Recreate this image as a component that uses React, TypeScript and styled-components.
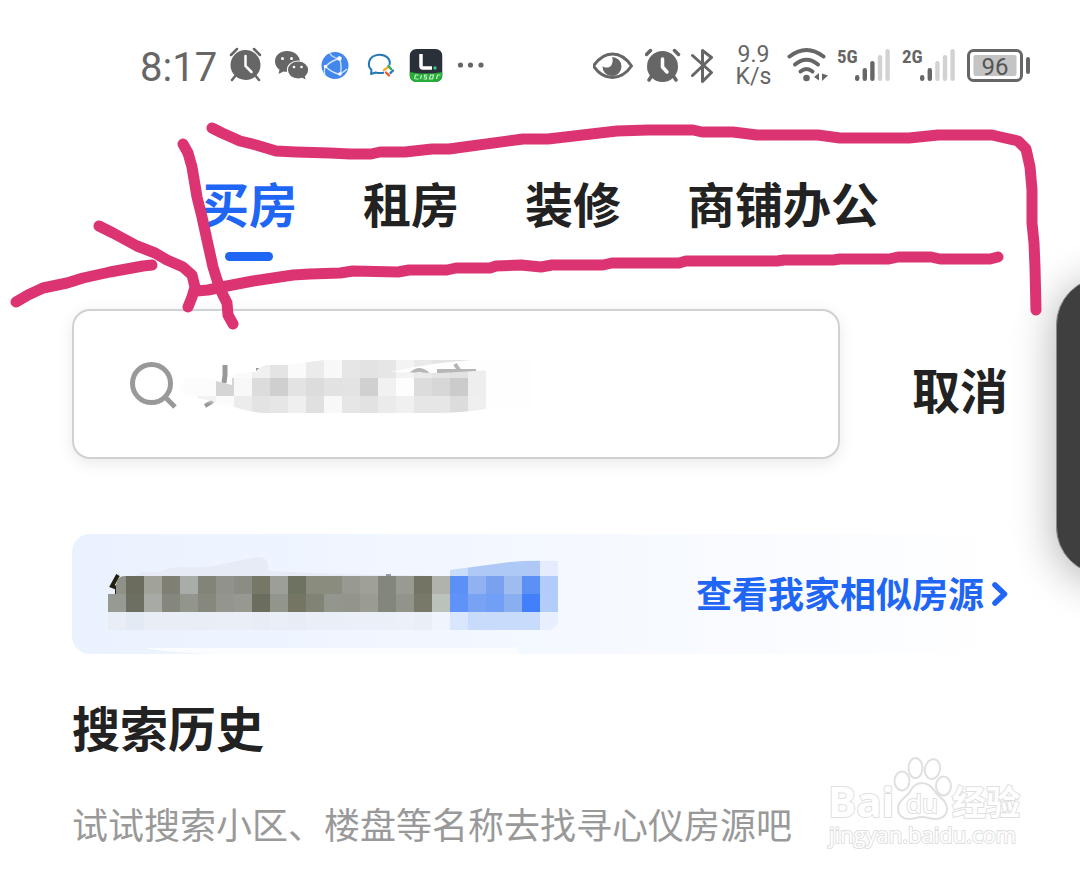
import React from 'react';
import styled, { createGlobalStyle } from 'styled-components';

const GlobalStyle = createGlobalStyle`
  body {
    margin: 0;
    background: #fff;
    font-family: Roboto, 'Noto Sans CJK SC', sans-serif;
    color: #222;
  }
`;

const Screen = styled.div`
  position: relative;
  min-height: 100vh;
  overflow: hidden;
`;

const StatusBar = styled.header`
  display: flex;
  justify-content: space-between;
  padding: 44px 49px 0 140px;
  color: #666;
`;

const StatusGroup = styled.div<{ $gap: number }>`
  display: flex;
  align-items: center;
  gap: ${(p) => p.$gap}px;
  height: 44px;
`;

const Clock = styled.time`
  width: 77px;
  padding-top: 4px;
  font-size: 40px;
  line-height: 44px;
  white-space: nowrap;
`;

const NetSpeed = styled.div`
  width: 44px;
  font-size: 23px;
  line-height: 22px;
`;

const SpeedLine = styled.span`
  display: block;
  width: 37px;
  text-align: center;
`;

const Glyph = styled.svg`
  display: block;
  flex: none;
  height: 40px;
`;

const Main = styled.main`
  padding: 86px 72px 0;
`;

const Tabs = styled.nav`
  display: flex;
  gap: 66px;
  padding-left: 129px;
`;

const Tab = styled.button<{ $active?: boolean }>`
  display: flex;
  flex-direction: column;
  align-items: center;
  gap: 22px;
  padding: 0;
  border: 0;
  background: none;
  font: 700 48px/56px 'Noto Sans CJK SC', sans-serif;
  white-space: nowrap;
  color: ${(p) => (p.$active ? '#1f66f5' : '#222')};

  &::after {
    content: '';
    width: 48px;
    height: 9px;
    border-radius: 5px;
    background: ${(p) => (p.$active ? '#1f66f5' : 'transparent')};
  }
`;

const SearchRow = styled.form`
  display: flex;
  align-items: center;
  gap: 72px;
  margin-top: 48px;
`;

const SearchBox = styled.label`
  display: flex;
  align-items: center;
  flex: 1;
  box-sizing: border-box;
  height: 150px;
  padding-left: 54px;
  border: 2px solid #d0d1d4;
  border-radius: 18px;
  background: #fff;
  box-shadow: 0 4px 16px rgba(0, 0, 0, 0.09);
`;

const SearchField = styled.div`
  position: relative;
  flex: 1;
`;

const SearchInput = styled.input`
  width: 100%;
  box-sizing: border-box;
  padding: 0 20px;
  border: 0;
  outline: 0;
  background: none;
  font: 400 42px/60px 'Noto Sans CJK SC', sans-serif;
  color: #999;
`;

const SearchMask = styled.svg`
  position: absolute;
  left: 0;
  top: 0;
  pointer-events: none;
`;

const Cancel = styled.button`
  margin-top: 8px;
  padding: 0;
  border: 0;
  background: none;
  font: 700 48px/56px 'Noto Sans CJK SC', sans-serif;
  color: #222;
`;

const Banner = styled.section`
  display: flex;
  align-items: center;
  justify-content: space-between;
  height: 120px;
  margin-top: 75px;
  padding-left: 36px;
  border-radius: 18px;
  background: linear-gradient(90deg, #eaf2ff, #f4f8ff 50%, #ffffff);
`;

const BannerLink = styled.a`
  display: flex;
  align-items: center;
  gap: 8px;
  font: 700 36px/48px 'Noto Sans CJK SC', sans-serif;
  white-space: nowrap;
  text-decoration: none;
  color: #1f66f5;
`;

const BannerLabel = styled.span`
  padding-bottom: 4px;
`;

const BannerPicture = styled.svg`
  display: block;
  flex: none;
`;

const HistoryTitle = styled.h2`
  margin: 44px 0 0;
  font: 700 48px/56px 'Noto Sans CJK SC', sans-serif;
`;

const HistoryHint = styled.p`
  margin: 45px 0 0;
  font: 400 36px/48px 'Noto Sans CJK SC', sans-serif;
  color: #999;
`;

const EdgeHandle = styled.div`
  position: absolute;
  right: -72px;
  top: 277px;
  box-sizing: border-box;
  width: 96px;
  height: 298px;
  border: 1px solid #8a8a8a;
  border-radius: 48px;
  background: #3f3f3f;
  box-shadow: 0 6px 44px rgba(0, 0, 0, 0.32);
`;

const Annotation = styled.svg`
  position: absolute;
  left: 0;
  top: 0;
  width: 100%;
  pointer-events: none;
`;

const Watermark = styled.svg`
  position: absolute;
  right: 54px;
  bottom: 21px;
`;

const AlarmIcon = () => (
  <Glyph width="34" viewBox="229 46 34 40" fill="none" strokeLinecap="round" aria-label="闹钟">
    <circle cx="245.500" cy="65" r="15" fill="#666" />
    <path d="M231 55l6-6M260 55l-6-6M236 75l-4 5M255 75l4 5" stroke="#666" strokeWidth="2.500" />
    <path d="M245.500 56v10l6 6" stroke="#fff" strokeWidth="2.500" />
  </Glyph>
);

const WechatIcon = () => (
  <Glyph width="34" viewBox="274 46 34 40" fill="#666" aria-label="微信">
    <path d="M286 51c-7 0-12 4.500-12 10.500 0 3.500 2 6.500 4.500 8.300L277.500 74l5-2.400c2 .5 3 .6 5 .6 7 0 11.500-4.500 11.500-10.500S293 51 286 51z" />
    <path
      d="M297 61c-6 0-10.600 4-10.600 9s4.600 9 10.600 9c1.600 0 2.900-.2 4.200-.7l4.300 2.200-1-3.900c2-1.600 3.200-4 3.200-6.600 0-5-4.700-9-10.700-9z"
      stroke="#fff"
      strokeWidth="1.200"
    />
    <g fill="#fff">
      <circle cx="281.500" cy="58.500" r="1.500" />
      <circle cx="290.500" cy="58.500" r="1.500" />
      <circle cx="293" cy="67" r="1.300" />
      <circle cx="300.500" cy="67" r="1.300" />
    </g>
  </Glyph>
);

const GlobeIcon = () => (
  <Glyph width="28" viewBox="321.500 46 28 40" fill="none" aria-label="浏览器">
    <circle cx="335.500" cy="65.500" r="13.500" fill="#4387ec" />
    <path
      d="M330 53q3 5 10 5.500M340 58.500q-8 2-14 8M340 58.500q3 9 .5 16M326 66.500q6 6 14.500 8M326 66.500q-2 4-.5 9M340.500 74q4-2 7-5"
      stroke="#d4e6ff"
      strokeWidth="1.300"
    />
    <circle cx="340" cy="58.500" r="2.200" fill="#fff" />
    <circle cx="326" cy="66.500" r="1.800" fill="#fff" />
    <circle cx="340.500" cy="74" r="1.800" fill="#fff" />
  </Glyph>
);

const WorkChatIcon = () => (
  <Glyph width="36" viewBox="361 46 36 40" fill="none" aria-label="企业微信">
    <path
      d="M384 72.500c-2 .7-6 .6-8.500 0l-4.500 1.500.5-4c-5-5-3-14.500 7.500-15.300 7-.3 12 4.300 10.500 10.300"
      stroke="#2378b5"
      strokeWidth="2"
      strokeLinejoin="round"
    />
    <g strokeWidth="2.400" strokeLinecap="round">
      <path d="M384 70l3.500-2.500" stroke="#f3b02c" />
      <path d="M388.500 66l2.500 3" stroke="#36a853" />
      <path d="M390.500 73l2.500-2.500" stroke="#2378b5" />
      <path d="M386 72.500l3 3" stroke="#ea5a2c" />
    </g>
  </Glyph>
);

const LearnIcon = () => (
  <Glyph width="34" viewBox="408.500 46 34 40" fill="none" aria-label="学习">
    <clipPath id="tile">
      <rect x="409" y="49" width="33" height="33" rx="7" />
    </clipPath>
    <g clipPath="url(#tile)">
      <rect x="409" y="49" width="33" height="33" fill="#2a303a" />
      <path d="M409 72q16 3 33 0v10h-33z" fill="#27ac38" />
      <path d="M414 79l1-4h3m0 4h-3m5 0l1-4m2 4h3v-2h-2v-2h3m2 4h3l1-4h-3zm7 0l1-4h3" stroke="#c6efc9" strokeWidth="1.200" />
    </g>
    <path d="M420.500 54v12q0 2 2 2h9" stroke="#fff" strokeWidth="3.500" />
    <circle cx="434.500" cy="68" r="1.700" fill="#36c48a" />
  </Glyph>
);

const MoreIcon = () => (
  <Glyph width="32" viewBox="455 46 32 40" fill="#666" aria-label="更多">
    <circle cx="460.500" cy="65" r="2.600" />
    <circle cx="470.500" cy="65" r="2.600" />
    <circle cx="481" cy="65" r="2.600" />
  </Glyph>
);

const EyeIcon = () => (
  <Glyph width="44" viewBox="592 46 44 40" fill="none" aria-label="护眼">
    <path d="M592.500 66q8-12 19-12t19 12q-8 11.500-19 11.500T592.500 66z" stroke="#666" strokeWidth="3" strokeLinejoin="round" />
    <path d="M611 57a9.500 9.500 0 1 1-9.500 9c2 2 7 2.500 9-1 1.500-2.500 1.500-6 .5-8z" fill="#666" />
  </Glyph>
);

const RingIcon = () => (
  <Glyph width="38" viewBox="644 46 38 40" fill="none" strokeLinecap="round" aria-label="闹钟">
    <circle cx="661.500" cy="66.500" r="15.500" fill="#666" />
    <path d="M645.500 54.500l4-4M677.500 54.500l-4-4M650 77l-2 3M673 77l2 3" stroke="#666" strokeWidth="3.500" />
    <path d="M661.500 59v8l4.500 5" stroke="#fff" strokeWidth="3.500" />
  </Glyph>
);

const BluetoothIcon = () => (
  <Glyph width="36" viewBox="691 46 36 40" fill="none" aria-label="蓝牙">
    <path d="M692.500 55.500l19 17-9 9v-31l9 7-19 18" stroke="#666" strokeWidth="3" strokeLinecap="round" strokeLinejoin="round" />
  </Glyph>
);

const WifiIcon = () => (
  <Glyph width="42" viewBox="787 46 42 40" fill="none" aria-label="无线网络">
    <g stroke="#666" strokeWidth="4" strokeLinecap="round">
      <path d="M789.500 56.500q17-13 34 0" />
      <path d="M795 64.500q11.500-9.500 23 0" />
      <path d="M800.500 71.500q6-5 12 0" />
    </g>
    <circle cx="806.500" cy="78" r="3.300" fill="#666" />
    <path d="M819 73v7.500l-5-3.500zM822 81v-7.500l6 2z" fill="#666" />
  </Glyph>
);

const SignalText = styled.text`
  font: 700 19px 'Liberation Sans Narrow', 'Roboto Condensed', Roboto, sans-serif;
  fill: #666;
`;

const barTops = [75, 68, 61, 55, 49];

const Signal = ({ label, level }: { label: string; level: number }) => (
  <Glyph width="57" viewBox="836 46 57 40" aria-label={label}>
    <SignalText x="836" y="63">
      {label}
    </SignalText>
    {barTops.map((top, i) => (
      <rect key={top} x={854 + i * 7.6} y={top} width="4.400" height={81 - top} rx="2.200" fill={i < level ? '#666' : '#d2d2d2'} />
    ))}
  </Glyph>
);

const BatteryText = styled.text`
  font: 400 24px Roboto, sans-serif;
  fill: #555;
`;

const Battery = () => (
  <Glyph width="64" viewBox="967 46 64 40" aria-label="电量">
    <rect x="968.500" y="50.500" width="53" height="30" rx="5" fill="none" stroke="#666" strokeWidth="3" />
    <rect x="973.500" y="55" width="43" height="21" rx="2" fill="#c4c4c4" />
    <rect x="1026" y="57" width="4" height="17" rx="2" fill="#666" />
    <BatteryText x="995" y="75" textAnchor="middle">
      96
    </BatteryText>
  </Glyph>
);

const CELL = 18;

const Mosaic = ({ x, y, colors }: { x: number; y: number; colors: string }) => (
  <>
    {colors.split(' ').map((c, i) => (
      <rect key={i} x={x + i * CELL} y={y} width={CELL} height={CELL} fill={`#${c}`} shapeRendering="crispEdges" />
    ))}
  </>
);

const SearchBlur = () => (
  <SearchMask width="370" height="60" viewBox="180 354 370 60" aria-hidden="true">
    <path d="M225 365v10l-1 8" fill="none" stroke="#999" strokeWidth="5" />
    <path d="M205 406l8-5M258 368v5M411 374q8-8 17 0M437 371h39M455 364l4 6" fill="none" stroke="#999" strokeWidth="4" />
    <path
      d="M183 382q2-9 13-9l20 8 16 4q-2-10 8-11l14-2 10-6 30-1 28-5h210v48h-50q-130 4-210 4-40-1-80-14l-16-7q-9-4-8-11z"
      fill="#fdfdfd"
      opacity=".3"
    />
    <clipPath id="searchBrush">
      <path d="M183 382q2-9 13-9l20 8 16 4v-8q2-4 8-4l15-1q5-6 12-7h21l36-5h150q-40 2-83 12l49 1 53-3v37q-16 5-54 6H262q-15-1-36-9l-28-6q-14-1-15-8z" />
    </clipPath>
    <g clipPath="url(#searchBrush)">
      <Mosaic x={234} y={360} colors="fafafa f0f0f0 e4e4e4 fafafa ebebeb f8f8f8 e6e6e6 e3e3e3 e6e6e6 f3f3f3 eaeaea e4e4e4 e2e2e2 eeeeee" />
      <Mosaic x={180} y={378} colors="fcfcfc fcfcfc d5d5d5 f8f8f8 dcdcdc cfcfcf e3e3e3 dcdcdc e2e2e2 e3e3e3 d0d0d0 f1f1f1 fdfdfd dcdcdc d7d7d7 cbcbcb eeeeee" />
      <Mosaic x={198} y={396} colors="f2f2f2 fbfbfb ececec e3e3e3 e6e6e6 efefef e0e0e0 f8f8f8 e6e6e6 e2e2e2 ebebeb f0f0f0 e6e6e6 e6e6e6 dcdcdc efefef" />
    </g>
  </SearchMask>
);

const BannerBlur = () => (
  <BannerPicture width="480" height="120" viewBox="108 534 480 120" aria-hidden="true">
    <path d="M135 577q2-5 12-5h12q10-5 24-5 22 2 40-3l34-7q10 0 11 7v7l70 3 104 2z" fill="#e6ebf5" />
    <path d="M118 575l-6 11 5 2v6" fill="none" stroke="#221f0c" strokeWidth="4" />
    <path d="M386 575h5" stroke="#444" strokeWidth="1" />
    <clipPath id="bannerBrush">
      <path d="M108 594h8v-9q1-9 9-9h325v-6l60-8q20-2 48-1v59q0 10-12 10H108z" />
    </clipPath>
    <g clipPath="url(#bannerBrush)">
      <Mosaic x={450} y={558} colors="c9dcf9 aec9f6 aec9f6 aec9f6 aec9f6 e4ecfd" />
      <Mosaic
        x={108}
        y={576}
        colors="8f9088 6b6c5d a1a39b 7f7f73 a8adaa 82847a 91928b 8b8c84 767765 9b9f98 6e7261 8a8c7d 8a8c7f 989991 9fa097 83867a 999a92 737463 b0b2ac 5b90f5 91b1f2 78a1f0 9fbcf1 5b90f5 b1ccfb"
      />
      <Mosaic
        x={108}
        y={594}
        colors="979a93 6c6f61 a8aaa6 85877d 91958c 86887d 94958e 979890 6b6d5e 92958c 747562 818376 93968c 93948c 9a9b93 83867a 92938b 787968 bbc1bb 6093f7 78a2f3 719ff5 8aaff1 4180fa b3cdfb"
      />
      <Mosaic
        x={108}
        y={612}
        colors="e8edf6 e3eaf4 e8edf6 e8edf6 e9eef6 e9eef6 e9eef7 e9eef7 e8ecf4 eaeff7 e8edf5 eaeff7 eaeff7 ebeff8 ebeff8 ebeff7 ecf0f8 eaeff7 f0f5fd d9e6fd c9dbfb c9dbfb c9dbfb c9dbfb e8effe"
      />
    </g>
    <path d="M145 648h360l13-1v7H220q-50-1-75-6z" fill="#fbfcff" />
  </BannerPicture>
);

const strokes = [
  'M212 128L222 133 240 141 256 145 276 151 296 152 330 153 350 154 371 154 380 152 405 152 432 149 449 149 523 139 548 139 617 131 648 130 693 130 702 132 733 132 757 135 818 135 840 138 909 138 938 135 992 135 1005 138 1018 141 1026 149 1030 167 1032 190 1032 223 1034 243 1035 267 1036 310',
  'M197 291L208 290 227 286 253 281 293 275 310 274 340 273 353 271 398 272 409 270 447 270 456 268 490 268 496 266 521 265 541 267 552 265 603 265 612 263 679 263 686 261 777 261 784 260 833 260 840 259 889 259 898 257 931 257 940 259 990 259 998 257',
  'M183 144L188 153 192 167 197 197 202 217 207 240 213 267 217 280 222 293 227 303 228 315 233 324',
  'M99 226L113 233 137 246 155 253 167 260 183 267 192 275 195 287 192 297 188 307',
  'M16 302L28 295 43 288 67 283 83 278 110 272 143 266 152 265',
];

const MarkText = styled.text<{ $size: number; $weight: number }>`
  font: ${(p) => `${p.$weight} ${p.$size}px`} 'Open Sans', 'Noto Sans CJK SC', sans-serif;
  paint-order: stroke;
`;

export default function App() {
  return (
    <Screen>
      <GlobalStyle />
      <StatusBar>
        <StatusGroup $gap={12}>
          <Clock>8:17</Clock>
          <AlarmIcon />
          <WechatIcon />
          <GlobeIcon />
          <WorkChatIcon />
          <LearnIcon />
          <MoreIcon />
        </StatusGroup>
        <StatusGroup $gap={8}>
          <EyeIcon />
          <RingIcon />
          <BluetoothIcon />
          <NetSpeed>
            <SpeedLine>9.9</SpeedLine>
            <SpeedLine>K/s</SpeedLine>
          </NetSpeed>
          <WifiIcon />
          <Signal label="5G" level={3} />
          <Signal label="2G" level={2} />
          <Battery />
        </StatusGroup>
      </StatusBar>

      <Main>
        <Tabs>
          <Tab type="button" $active>
            买房
          </Tab>
          <Tab type="button">租房</Tab>
          <Tab type="button">装修</Tab>
          <Tab type="button">商铺办公</Tab>
        </Tabs>

        <SearchRow onSubmit={(e) => e.preventDefault()}>
          <SearchBox>
            <svg width="52" height="52" viewBox="128 358 52 52" fill="none" stroke="#999" strokeWidth="5" aria-hidden="true">
              <circle cx="151.500" cy="383.500" r="19" />
              <path d="M164.500 396.500l10.500 10.500" />
            </svg>
            <SearchField>
              <SearchInput type="text" aria-label="搜索" />
              <SearchBlur />
            </SearchField>
          </SearchBox>
          <Cancel type="button">取消</Cancel>
        </SearchRow>

        <Banner>
          <BannerBlur />
          <BannerLink href="#similar">
            <BannerLabel>查看我家相似房源</BannerLabel>
            <svg width="16" height="26" viewBox="0 0 16 26" fill="none" aria-hidden="true">
              <path d="M3 4l9.500 9-9.500 9" stroke="#1f66f5" strokeWidth="5.500" strokeLinecap="round" strokeLinejoin="round" />
            </svg>
          </BannerLink>
        </Banner>

        <HistoryTitle>搜索历史</HistoryTitle>
        <HistoryHint>试试搜索小区、楼盘等名称去找寻心仪房源吧</HistoryHint>
      </Main>

      <EdgeHandle />

      <Annotation viewBox="0 0 1080 340" fill="none" stroke="#dc3472" strokeWidth="11" strokeLinecap="round" strokeLinejoin="round" aria-hidden="true">
        {strokes.map((d) => (
          <path key={d} d={d} />
        ))}
      </Annotation>

      <Watermark width="204" height="100" viewBox="822 752 204 100" fill="#fff" stroke="#e0e0e0" strokeWidth="2">
        <MarkText $size={42} $weight={700} x="828" y="817">
          Bai
        </MarkText>
        <ellipse cx="902" cy="781" rx="7.500" ry="9.500" />
        <ellipse cx="915.500" cy="768" rx="7" ry="10" />
        <ellipse cx="932.500" cy="769" rx="7.500" ry="10" transform="rotate(12 932 769)" />
        <ellipse cx="943.500" cy="786" rx="7.500" ry="9.500" />
        <path d="M922 783c7 0 11 5 14 10 5 6 11 8 11 16 0 7-6 10-12 10-5 0-8-2-13-2s-8 2-13 2c-6 0-11-4-11-10 0-8 6-10 11-16 3-5 6-10 13-10z" />
        <MarkText $size={26} $weight={400} x="906" y="813">
          du
        </MarkText>
        <MarkText $size={34} $weight={700} x="952" y="815">
          经验
        </MarkText>
        <MarkText $size={22} $weight={400} x="829" y="843">
          jingyan.baidu.com
        </MarkText>
      </Watermark>
    </Screen>
  );
}
